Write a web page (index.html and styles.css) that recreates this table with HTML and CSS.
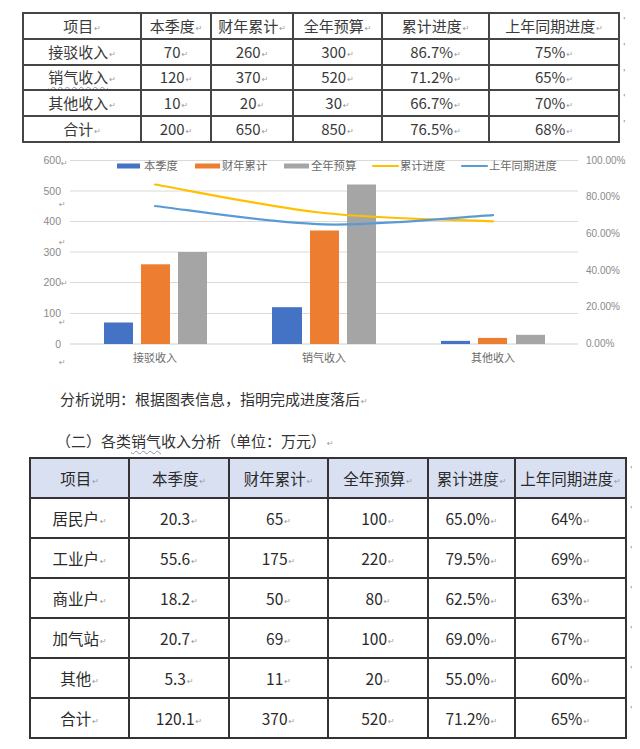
FILE: index.html
```html
<!DOCTYPE html>
<html lang="zh-CN">
<head>
<meta charset="utf-8">
<title>收入分析</title>
<link rel="stylesheet" href="styles.css">
</head>
<body>
<table class="t1">
  <tr><td>项目<i class="pm">↵</i></td><td>本季度<i class="pm">↵</i></td><td>财年累计<i class="pm">↵</i></td><td>全年预算<i class="pm">↵</i></td><td>累计进度<i class="pm">↵</i></td><td>上年同期进度<i class="pm">↵</i></td><td class="mk">'</td></tr>
  <tr><td>接驳收入<i class="pm">↵</i></td><td>70<i class="pm">↵</i></td><td>260<i class="pm">↵</i></td><td>300<i class="pm">↵</i></td><td>86.7%<i class="pm">↵</i></td><td>75%<i class="pm">↵</i></td><td class="mk">'</td></tr>
  <tr><td><span class="wavy">销气收入</span><i class="pm">↵</i></td><td>120<i class="pm">↵</i></td><td>370<i class="pm">↵</i></td><td>520<i class="pm">↵</i></td><td>71.2%<i class="pm">↵</i></td><td>65%<i class="pm">↵</i></td><td class="mk">'</td></tr>
  <tr><td>其他收入<i class="pm">↵</i></td><td>10<i class="pm">↵</i></td><td>20<i class="pm">↵</i></td><td>30<i class="pm">↵</i></td><td>66.7%<i class="pm">↵</i></td><td>70%<i class="pm">↵</i></td><td class="mk">'</td></tr>
  <tr><td>合计<i class="pm">↵</i></td><td>200<i class="pm">↵</i></td><td>650<i class="pm">↵</i></td><td>850<i class="pm">↵</i></td><td>76.5%<i class="pm">↵</i></td><td>68%<i class="pm">↵</i></td><td class="mk">'</td></tr>
</table>

<svg class="chart" width="640" height="230" viewBox="0 0 640 230">
  <g class="grid">
    <line x1="70" x2="578" y1="13.5" y2="13.5"/>
    <line x1="70" x2="578" y1="44" y2="44"/>
    <line x1="70" x2="578" y1="74.5" y2="74.5"/>
    <line x1="70" x2="578" y1="105" y2="105"/>
    <line x1="70" x2="578" y1="135.5" y2="135.5"/>
    <line x1="70" x2="578" y1="166.5" y2="166.5"/>
    <line class="base" x1="70" x2="578" y1="197" y2="197"/>
  </g>
  <g class="ylab">
    <text x="61" y="17">600</text>
    <text x="61" y="47.5">500</text>
    <text x="61" y="78">400</text>
    <text x="61" y="108.5">300</text>
    <text x="61" y="139">200</text>
    <text x="61" y="170">100</text>
    <text x="61" y="200.5">0</text>
  </g>
  <g class="cmark">
    <text x="61" y="19">↵</text>
    <text x="59" y="60">↵</text>
    <text x="59" y="98">↵</text>
    <text x="61" y="139">↵</text>
    <text x="59" y="178">↵</text>
    <text x="59" y="218">↵</text>
  </g>
  <g class="rlab">
    <text x="586" y="17">100.00%</text>
    <text x="586" y="53">80.00%</text>
    <text x="586" y="90">60.00%</text>
    <text x="586" y="127">40.00%</text>
    <text x="586" y="163">20.00%</text>
    <text x="586" y="200">0.00%</text>
  </g>
  <g class="bars">
    <rect class="b1" x="104" y="175.5" width="29" height="21.5"/>
    <rect class="b2" x="141" y="117.3" width="29" height="79.7"/>
    <rect class="b3" x="178" y="105" width="29" height="92"/>
    <rect class="b1" x="272" y="160.2" width="30" height="36.8"/>
    <rect class="b2" x="310" y="83.5" width="29" height="113.5"/>
    <rect class="b3" x="347" y="37.5" width="29" height="159.5"/>
    <rect class="b1" x="441" y="193.9" width="29" height="3.1"/>
    <rect class="b2" x="478" y="190.9" width="29" height="6.1"/>
    <rect class="b3" x="516" y="187.8" width="29" height="9.2"/>
  </g>
  <path class="l1" d="M155 37.5 C183.2 42.3 267.7 59.9 324 66 C380.3 72.1 464.8 72.9 493 74.3"/>
  <path class="l2" d="M155 59 C183.2 62.1 267.7 75.9 324 77.4 C380.3 78.9 464.8 69.7 493 68.2"/>
  <g class="xlab">
    <text x="155" y="215">接驳收入</text>
    <text x="324" y="215">销气收入</text>
    <text x="493" y="215">其他收入</text>
  </g>
  <g class="legend">
    <rect class="b1" x="117" y="16.5" width="23" height="5"/>
    <text x="144" y="23">本季度</text>
    <rect class="b2" x="195" y="16.5" width="25" height="5"/>
    <text x="222" y="23">财年累计</text>
    <rect class="b3" x="284" y="16.5" width="25" height="5"/>
    <text x="311" y="23">全年预算</text>
    <line class="l1" x1="373" x2="398" y1="19" y2="19"/>
    <text x="400" y="23">累计进度</text>
    <line class="l2" x1="462" x2="487" y1="19" y2="19"/>
    <text x="489" y="23">上年同期进度</text>
  </g>
</svg>

<p class="note">分析说明：根据图表信息，指明完成进度落后<i class="pm">↵</i></p>
<p class="heading">（二）各类<span class="wavy">销气</span>收入分析（单位：万元）<i class="pm">↵</i></p>

<table class="t2">
  <tr class="hd"><td>项目<i class="pm">↵</i></td><td>本季度<i class="pm">↵</i></td><td>财年累计<i class="pm">↵</i></td><td>全年预算<i class="pm">↵</i></td><td>累计进度<i class="pm">↵</i></td><td>上年同期进度<i class="pm">↵</i></td><td class="mk">'</td></tr>
  <tr><td>居民户<i class="pm">↵</i></td><td>20.3<i class="pm">↵</i></td><td>65<i class="pm">↵</i></td><td>100<i class="pm">↵</i></td><td>65.0%<i class="pm">↵</i></td><td>64%<i class="pm">↵</i></td><td class="mk">'</td></tr>
  <tr><td>工业户<i class="pm">↵</i></td><td>55.6<i class="pm">↵</i></td><td>175<i class="pm">↵</i></td><td>220<i class="pm">↵</i></td><td>79.5%<i class="pm">↵</i></td><td>69%<i class="pm">↵</i></td><td class="mk">'</td></tr>
  <tr><td>商业户<i class="pm">↵</i></td><td>18.2<i class="pm">↵</i></td><td>50<i class="pm">↵</i></td><td>80<i class="pm">↵</i></td><td>62.5%<i class="pm">↵</i></td><td>63%<i class="pm">↵</i></td><td class="mk">'</td></tr>
  <tr><td>加气站<i class="pm">↵</i></td><td>20.7<i class="pm">↵</i></td><td>69<i class="pm">↵</i></td><td>100<i class="pm">↵</i></td><td>69.0%<i class="pm">↵</i></td><td>67%<i class="pm">↵</i></td><td class="mk">'</td></tr>
  <tr><td>其他<i class="pm">↵</i></td><td>5.3<i class="pm">↵</i></td><td>11<i class="pm">↵</i></td><td>20<i class="pm">↵</i></td><td>55.0%<i class="pm">↵</i></td><td>60%<i class="pm">↵</i></td><td class="mk">'</td></tr>
  <tr><td>合计<i class="pm">↵</i></td><td>120.1<i class="pm">↵</i></td><td>370<i class="pm">↵</i></td><td>520<i class="pm">↵</i></td><td>71.2%<i class="pm">↵</i></td><td>65%<i class="pm">↵</i></td><td class="mk">'</td></tr>
</table>
</body>
</html>
```
FILE: styles.css
```css
html, body {
  margin: 0;
  padding: 0;
  background: #ffffff;
}
body {
  width: 640px;
  height: 749px;
  overflow: hidden;
  font-family: "Noto Sans CJK SC", "Liberation Sans", sans-serif;
  color: #333333;
}

.pm {
  font-style: normal;
  font-family: "DejaVu Sans", sans-serif;
  font-size: 8px;
  line-height: 1;
  color: #9a9a9a;
  margin-left: 1px;
  vertical-align: 1px;
}

.wavy {
  text-decoration: underline wavy #8f93b0;
  text-decoration-thickness: 1px;
  text-underline-offset: 3px;
}

table {
  border-collapse: collapse;
  width: max-content;
}
td {
  padding: 0;
  text-align: center;
  white-space: nowrap;
  overflow: hidden;
}
td.mk {
  border: none;
  text-align: left;
  vertical-align: top;
  padding-left: 3px;
  font-size: 9px;
  line-height: 10px;
  color: #888888;
}

/* top table */
.t1 {
  margin: 12px 0 0 22px;
  font-size: 15px;
  color: #3a3a3a;
}
.t1 td {
  border: 2px solid #454545;
  height: 23.8px;
  line-height: 18px;
}
.t1 td.mk { border: none; padding-top: 4px; height: auto; line-height: 10px; }
.t1 td:nth-child(1) { width: 116px; }
.t1 td:nth-child(2) { width: 68px; }
.t1 td:nth-child(3) { width: 80px; }
.t1 td:nth-child(4) { width: 87px; }
.t1 td:nth-child(5) { width: 105px; }
.t1 td:nth-child(6) { width: 128px; }
.t1 td:nth-child(7) { width: 8px; }

/* chart */
.chart {
  display: block;
  margin-top: 4px;
  font-family: "Noto Sans CJK SC", "Liberation Sans", sans-serif;
}
.grid line { stroke: #dadada; stroke-width: 1; }
.grid line.base { stroke: #cfcfcf; }
.ylab text { font-size: 10.5px; fill: #8a8a8a; text-anchor: end; font-family: "Liberation Sans", sans-serif; }
.rlab text { font-size: 10px; fill: #8a8a8a; font-family: "Liberation Sans", sans-serif; }
.cmark text { font-size: 8px; fill: #9a9a9a; font-family: "DejaVu Sans", sans-serif; }
.xlab text { font-size: 11px; fill: #6a6a6a; text-anchor: middle; }
.legend text { font-size: 11.3px; fill: #6a6a6a; }
.b1 { fill: #4472c4; }
.b2 { fill: #ed7d31; }
.b3 { fill: #a5a5a5; }
.l1 { fill: none; stroke: #ffc000; stroke-width: 2.2; stroke-linecap: round; }
.l2 { fill: none; stroke: #5b9bd5; stroke-width: 2.2; stroke-linecap: round; }

/* text */
.note {
  margin: 11px 0 0 60px;
  font-size: 15px;
  line-height: 22px;
  color: #333333;
}
.heading {
  margin: 20px 0 0 56px;
  font-size: 15px;
  line-height: 22px;
  color: #333333;
}

/* bottom table */
.t2 {
  margin: 5px 0 0 29px;
  font-size: 15.5px;
  color: #2a2a2a;
}
.t2 td {
  border: 2px solid #333333;
  height: 38px;
  line-height: 20px;
}
.t2 td.mk { border: none; padding-top: 8px; height: auto; line-height: 10px; }
.t2 tr.hd td { background: #d9e0f1; }
.t2 tr.hd td.mk { background: transparent; }
.t2 td:nth-child(1) { width: 97px; }
.t2 td:nth-child(2) { width: 98px; }
.t2 td:nth-child(3) { width: 97px; }
.t2 td:nth-child(4) { width: 98px; }
.t2 td:nth-child(5) { width: 85px; }
.t2 td:nth-child(6) { width: 109px; }
.t2 td:nth-child(7) { width: 8px; }
```
